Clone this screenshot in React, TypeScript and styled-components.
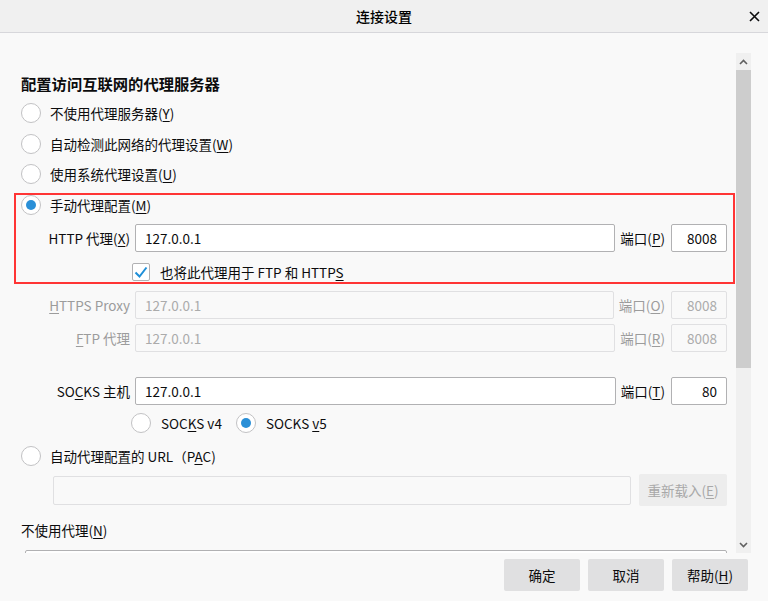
import React from 'react'
import styled, { createGlobalStyle } from 'styled-components'

const GlobalStyle = createGlobalStyle`
  html, body {
    margin: 0;
    padding: 0;
  }
  body {
    background: #f9f9f9;
    font-family: "Noto Sans CJK SC", "Noto Sans", sans-serif;
    font-size: 13.5px;
    color: #0c0c0d;
  }
  u {
    text-underline-offset: 2px;
  }
`

const Dialog = styled.div`
  width: 768px;
  height: 601px;
  display: flex;
  flex-direction: column;
  background: #f9f9f9;
  overflow: hidden;
`

const TitleBar = styled.div`
  height: 32px;
  flex: none;
  background: #f0f0f0;
  border-bottom: 1px solid #d7d7db;
  display: grid;
  grid-template-columns: 1fr auto 1fr;
  align-items: center;
`

const Title = styled.div`
  grid-column: 2;
  font-size: 14px;
  font-weight: 500;
  line-height: 20px;
  color: #000;
`

const CloseButton = styled.div`
  grid-column: 3;
  justify-self: end;
  margin-right: 6px;
  width: 16px;
  height: 16px;
  display: flex;
  align-items: center;
  justify-content: center;
`

const Body = styled.div`
  display: flex;
  height: 500px;
  padding: 20px 17px 0 0;
  flex: none;
`

const ScrollArea = styled.div`
  flex: 1;
  overflow: hidden;
  padding: 0 1px 0 14px;
  display: flex;
  flex-direction: column;
`

const Heading = styled.div`
  margin-top: 20px;
  padding-left: 7px;
  height: 20px;
  line-height: 20px;
  font-size: 15.3px;
  font-weight: 700;
`

const RadioGroup = styled.div`
  display: flex;
  flex-direction: column;
  gap: 0.5px;
  margin-top: 5px;
`

const RadioRow = styled.div<{ $h?: number; $mt?: number; $pl?: number }>`
  display: flex;
  align-items: center;
  height: ${(p) => p.$h ?? 30}px;
  margin-top: ${(p) => p.$mt ?? 0}px;
  padding-left: ${(p) => p.$pl ?? 7}px;
`

const RadioCircle = styled.span<{ $checked?: boolean }>`
  width: 20px;
  height: 20px;
  box-sizing: border-box;
  border-radius: 50%;
  border: 1px solid #c2c2c4;
  background: #fff;
  display: flex;
  align-items: center;
  justify-content: center;
  flex: none;

  &::after {
    content: '';
    width: 10px;
    height: 10px;
    border-radius: 50%;
    background: #2a8fd7;
    display: ${(p) => (p.$checked ? 'block' : 'none')};
  }
`

const OptionText = styled.span<{ $gap?: number }>`
  margin-left: ${(p) => p.$gap ?? 9}px;
  line-height: 20px;
  white-space: nowrap;
`

const Highlight = styled.div`
  margin-top: 4px;
  padding: 2px 0 3px;
  box-shadow: inset 0 0 0 2px #ff3535;
  display: flex;
  flex-direction: column;
`

const FieldRow = styled.div<{ $mt: number; $h?: number }>`
  display: flex;
  align-items: center;
  height: ${(p) => p.$h ?? 28}px;
  margin-top: ${(p) => p.$mt}px;
  padding-right: 8px;
`

const FieldLabel = styled.span<{ $disabled?: boolean }>`
  width: 116px;
  flex: none;
  margin-right: 5px;
  text-align: right;
  white-space: nowrap;
  line-height: 20px;
  color: ${(p) => (p.$disabled ? '#9c9c9c' : '#0c0c0d')};
`

const TextInput = styled.input<{ $disabled?: boolean }>`
  flex: 1;
  min-width: 0;
  height: 28px;
  box-sizing: border-box;
  margin: 0;
  padding: 0 9px;
  border: 1px solid ${(p) => (p.$disabled ? '#e0e0e2' : '#b1b1b3')};
  border-radius: 2px;
  background: ${(p) => (p.$disabled ? '#f9f9f9' : '#fff')};
  color: ${(p) => (p.$disabled ? '#ababab' : '#0c0c0d')};
  font-family: inherit;
  font-size: 13.5px;
  outline: none;
`

const PortLabel = styled.span<{ $disabled?: boolean }>`
  flex: none;
  margin: 0 6px 0 5px;
  white-space: nowrap;
  line-height: 20px;
  color: ${(p) => (p.$disabled ? '#9c9c9c' : '#0c0c0d')};
`

const PortInput = styled(TextInput)`
  flex: none;
  width: 56px;
  text-align: right;
`

const CheckRow = styled.div`
  display: flex;
  align-items: center;
  height: 18px;
  margin-top: 11px;
  padding-left: 118px;
`

const CheckBox = styled.span`
  width: 18px;
  height: 18px;
  box-sizing: border-box;
  border: 1px solid #b1b1b3;
  border-radius: 2px;
  background: #fff;
  display: flex;
  align-items: center;
  justify-content: center;
  flex: none;
`

const VersionGap = styled.span`
  width: 14px;
  flex: none;
`

const PacRow = styled.div`
  display: flex;
  align-items: center;
  gap: 8px;
  height: 32px;
  margin-top: 8px;
  padding: 0 8px 0 39px;
`

const PacInput = styled(TextInput)`
  height: 29px;
`

const ReloadButton = styled.div`
  width: 88px;
  height: 32px;
  flex: none;
  border-radius: 2px;
  background: #ededed;
  color: #a8a8a8;
  display: flex;
  align-items: center;
  justify-content: center;
  white-space: nowrap;
`

const PlainLabel = styled.div`
  margin-top: 14px;
  padding-left: 7px;
  height: 20px;
  line-height: 20px;
`

const TextArea = styled.div`
  margin: 10px 8px 0 11px;
  height: 60px;
  flex: none;
  border: 1px solid #b1b1b3;
  border-radius: 2px;
  background: #fff;
`

const Scrollbar = styled.div`
  width: 15px;
  flex: none;
  display: flex;
  flex-direction: column;
  background: #f0f0f0;
`

const ScrollArrow = styled.div<{ $h: number }>`
  height: ${(p) => p.$h}px;
  flex: none;
  display: flex;
  align-items: center;
  justify-content: center;
`

const ScrollThumb = styled.div`
  height: 298px;
  flex: none;
  background: #cdcdcd;
`

const ScrollTrack = styled.div`
  flex: 1;
`

const Footer = styled.div`
  display: flex;
  justify-content: flex-end;
  gap: 8px;
  padding: 6px 20px 0 0;
`

const Button = styled.div`
  min-width: 76px;
  height: 32px;
  box-sizing: border-box;
  padding: 0 12px;
  border-radius: 2px;
  background: #e0e0e1;
  display: flex;
  align-items: center;
  justify-content: center;
  white-space: nowrap;
`

const Radio = ({ checked, children, gap }: { checked?: boolean; children: React.ReactNode; gap?: number }) => (
  <>
    <RadioCircle $checked={checked} />
    <OptionText $gap={gap}>{children}</OptionText>
  </>
)

const Chevron = ({ up }: { up?: boolean }) => (
  <svg width="9" height="6" viewBox="0 0 9 6">
    <polyline
      points={up ? '1,5 4.5,1.5 8,5' : '1,1 4.5,4.5 8,1'}
      fill="none"
      stroke="#606060"
      strokeWidth="1.6"
    />
  </svg>
)

export default function App() {
  return (
    <>
      <GlobalStyle />
      <Dialog>
        <TitleBar>
          <Title>连接设置</Title>
          <CloseButton>
            <svg width="11" height="11" viewBox="0 0 11 11">
              <path d="M1 1L10 10M10 1L1 10" stroke="#0c0c0d" strokeWidth="1.6" />
            </svg>
          </CloseButton>
        </TitleBar>

        <Body>
          <ScrollArea>
            <Heading>配置访问互联网的代理服务器</Heading>
            <RadioGroup>
              <RadioRow>
                <Radio>
                  不使用代理服务器(<u>Y</u>)
                </Radio>
              </RadioRow>
              <RadioRow>
                <Radio>
                  自动检测此网络的代理设置(<u>W</u>)
                </Radio>
              </RadioRow>
              <RadioRow>
                <Radio>
                  使用系统代理设置(<u>U</u>)
                </Radio>
              </RadioRow>
            </RadioGroup>

            <Highlight>
              <RadioRow $h={20}>
                <Radio checked>
                  手动代理配置(<u>M</u>)
                </Radio>
              </RadioRow>
              <FieldRow $mt={9}>
                <FieldLabel>
                  HTTP 代理(<u>X</u>)
                </FieldLabel>
                <TextInput readOnly value="127.0.0.1" />
                <PortLabel>
                  端口(<u>P</u>)
                </PortLabel>
                <PortInput readOnly value="8008" />
              </FieldRow>
              <CheckRow>
                <CheckBox>
                  <svg width="14" height="12" viewBox="0 0 14 12">
                    <polyline points="1.5,6.5 5.5,10.5 12.5,1.5" fill="none" stroke="#1f8fd8" strokeWidth="2" />
                  </svg>
                </CheckBox>
                <OptionText $gap={10}>
                  也将此代理用于 FTP 和 HTTP<u>S</u>
                </OptionText>
              </CheckRow>
            </Highlight>

            <FieldRow $mt={7}>
              <FieldLabel $disabled>
                <u>H</u>TTPS Proxy
              </FieldLabel>
              <TextInput $disabled readOnly value="127.0.0.1" />
              <PortLabel $disabled>
                端口(<u>O</u>)
              </PortLabel>
              <PortInput $disabled readOnly value="8008" />
            </FieldRow>
            <FieldRow $mt={5}>
              <FieldLabel $disabled>
                <u>F</u>TP 代理
              </FieldLabel>
              <TextInput $disabled readOnly value="127.0.0.1" />
              <PortLabel $disabled>
                端口(<u>R</u>)
              </PortLabel>
              <PortInput $disabled readOnly value="8008" />
            </FieldRow>

            <FieldRow $mt={25}>
              <FieldLabel>
                SO<u>C</u>KS 主机
              </FieldLabel>
              <TextInput readOnly value="127.0.0.1" />
              <PortLabel>
                端口(<u>T</u>)
              </PortLabel>
              <PortInput readOnly value="80" />
            </FieldRow>
            <RadioRow $h={20} $mt={8} $pl={117}>
              <Radio gap={10}>
                SOC<u>K</u>S v4
              </Radio>
              <VersionGap />
              <Radio checked gap={10}>
                SOCKS <u>v</u>5
              </Radio>
            </RadioRow>

            <RadioRow $h={20} $mt={13}>
              <Radio>
                自动代理配置的 URL（P<u>A</u>C)
              </Radio>
            </RadioRow>
            <PacRow>
              <PacInput $disabled readOnly value="" />
              <ReloadButton>
                重新载入(<u>E</u>)
              </ReloadButton>
            </PacRow>

            <PlainLabel>
              不使用代理(<u>N</u>)
            </PlainLabel>
            <TextArea />
          </ScrollArea>

          <Scrollbar>
            <ScrollArrow $h={17}>
              <Chevron up />
            </ScrollArrow>
            <ScrollThumb />
            <ScrollTrack />
            <ScrollArrow $h={17}>
              <Chevron />
            </ScrollArrow>
          </Scrollbar>
        </Body>

        <Footer>
          <Button>确定</Button>
          <Button>取消</Button>
          <Button>
            帮助(<u>H</u>)
          </Button>
        </Footer>
      </Dialog>
    </>
  )
}
